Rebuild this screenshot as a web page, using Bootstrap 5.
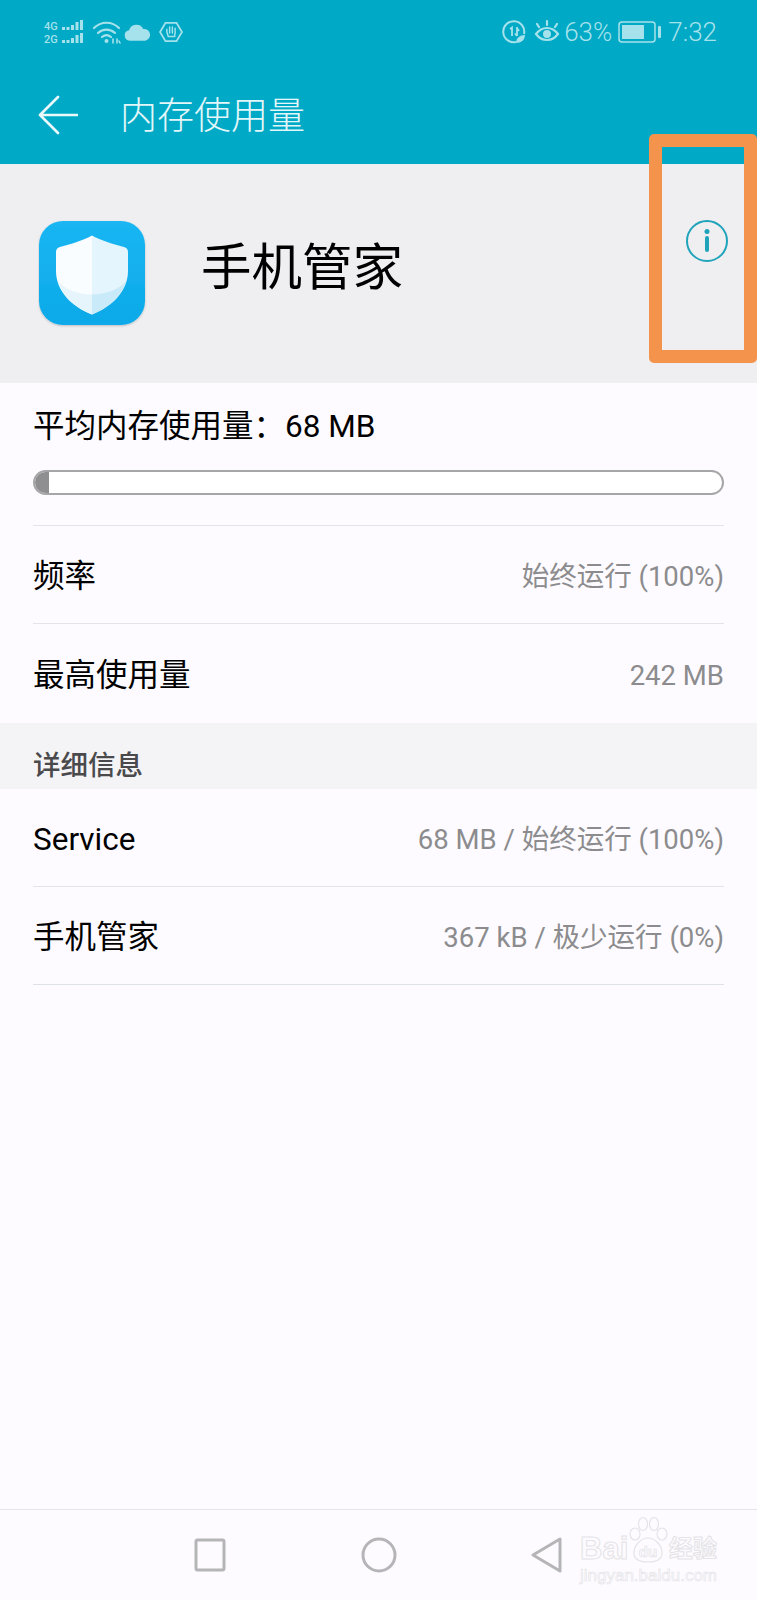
<!DOCTYPE html>
<html lang="zh-CN">
<head>
    <meta charset="UTF-8">
    <meta name="viewport" content="width=device-width, initial-scale=1">
    <title>内存使用量</title>
    <link href="https://cdn.jsdelivr.net/npm/bootstrap@5.3.2/dist/css/bootstrap.min.css" rel="stylesheet">
    <style>
        html, body { height: 100%; }
        body {
            width: 757px;
            height: 1600px;
            overflow: hidden;
            background: #fdfbff;
            color: #000;
            font-family: Roboto, "Noto Sans CJK SC", sans-serif;
        }
        .phone { height: 1600px; position: relative; }
        /* header */
        .top-head { height: 164px; background: #00a9c5; color: #d9f3f7; }
        .status-row { height: 64px; padding: 0 40px 0 44px; color: #a5e2ec; }
        .status-text { font-size: 26px; font-weight: 300; line-height: 1; }
        .batt-ico { margin: 0 6px; }
        .wifi-ico { margin-right: -6px; }
        .title-row { height: 100px; padding: 2px 0 0 38px; }
        .title-text { font-size: 37px; font-weight: 300; margin-left: 42px; padding-top: 2px; line-height: 1; color: #e3f7fa; }
        /* app block */
        .app-block { height: 219px; background: #efeef0; padding: 0 29px 0 38px; }
        .app-name { font-size: 50.500px; font-weight: 400; margin-left: 53px; line-height: 1; padding-bottom: 10px; }
        .info-ico { margin-top: -66px; }
        /* usage */
        .usage-block { padding: 0 33px; }
        .usage-title { height: 87px; font-size: 31.500px; font-weight: 400; }
        .usage-bar { height: 25px; border: 2px solid #a6a6a8; border-radius: 13px; background: #fff; }
        .usage-bar .progress-bar { background: #8f8f92; }
        .usage-gap { height: 31px; border-bottom: 1px solid #e4e3e6; }
        /* rows */
        .info-list { --bs-list-group-bg: transparent; --bs-list-group-border-color: #e4e3e6; margin: 0 33px; }
        .info-list .list-group-item { height: 98px; padding: 4px 0 0; font-size: 31.500px; color: #000; }
        .info-list .list-group-item.no-line { border-bottom: 0; height: 99px; }
        .row-value { font-size: 27.500px; color: #8c8c8e; }
        .section-head { height: 66px; background: #f4f3f6; padding: 19px 33px 0; font-size: 27.500px; font-weight: 500; color: #4a4a4c; }
        /* nav bar */
        .soft-keys { position: absolute; left: 0; right: 0; bottom: 0; height: 91px; border-top: 1px solid #e6e5e8; padding-left: 193px; gap: 133px; }
        /* overlays */
        .mark-box { position: absolute; left: 649px; top: 134px; width: 108px; height: 229px; border: 13px solid #f4934c; border-radius: 5px; }
        .bd-mark { position: absolute; left: 580px; top: 1516px; width: 138px; color: #fdfbff; font-family: "Liberation Sans", "Noto Sans CJK SC", sans-serif; -webkit-text-stroke: 1px #e4e3e6; }
        .bd-top { height: 50px; font-weight: 700; line-height: 1; }
        .bd-lat { font-size: 31px; width: 48px; padding-bottom: 2px; }
        .bd-cn { font-size: 24px; margin-left: 1px; padding-bottom: 5px; white-space: nowrap; }
        .bd-sub { font-size: 17px; line-height: 20px; -webkit-text-stroke: .6px #e4e3e6; white-space: nowrap; }
    </style>
</head>
<body>
<div class="phone">

    <div class="top-head">
        <div class="status-row d-flex align-items-center justify-content-between">
            <div class="d-flex align-items-center gap-2">
                <svg width="40" height="26" viewBox="0 0 40 26" fill="currentColor">
                    <text x="0" y="11" font-size="11" font-weight="500" font-family="Roboto">4G</text>
                    <text x="0" y="24" font-size="11" font-weight="500" font-family="Roboto">2G</text>
                    <rect x="18" y="8" width="3" height="3"/><rect x="22.500" y="8" width="3" height="3"/><rect x="27" y="6" width="3" height="5"/><rect x="31.500" y="3" width="3" height="8"/><rect x="36" y="1" width="3" height="10"/>
                    <rect x="18" y="21" width="3" height="3"/><rect x="22.500" y="21" width="3" height="3"/><rect x="27" y="19" width="3" height="5"/><rect x="31.500" y="16" width="3" height="8"/><rect x="36" y="14" width="3" height="10"/>
                </svg>
                <svg class="wifi-ico" width="30" height="26" viewBox="0 0 30 26" fill="none" stroke="currentColor" stroke-width="2.200" stroke-linecap="round">
                    <path d="M2 9C9 2 20 2 27 9"/><path d="M6 14c5-4.500 12-4.500 17 0"/><path d="M10 18c3-2.500 6-2.500 9 0"/>
                    <circle cx="14.500" cy="22" r="2" fill="currentColor" stroke="none"/>
                    <path d="M21 24v-4M25 24v-4M28 24l-1-2" stroke-width="1.600"/>
                </svg>
                <svg width="27" height="20" viewBox="0 0 28 20" fill="currentColor"><path d="M6 19a5.500 5.500 0 0 1-.8-10.900A8 8 0 0 1 20 7a6 6 0 0 1 2 12z"/></svg>
                <svg width="24" height="22" viewBox="0 0 26 24" fill="none" stroke="currentColor" stroke-width="2"><path d="M7 2h12l6 10-6 10H7L1 12z"/><path d="M8.500 12V9M11.500 13V6.500M14.500 13V6.500M17.500 13V8M8.500 12l1.500 5h7l.5-5" stroke-width="1.600" stroke-linecap="round"/></svg>
            </div>
            <div class="d-flex align-items-center status-text">
                <svg width="24" height="24" viewBox="0 0 24 24" fill="none" stroke="currentColor" stroke-width="2" class="me-2"><path d="M14 22a10.500 10.500 0 1 1 8-8"/><path d="M8 9l2-1.500V16M15 7v9M15 16l-2-2.500M17 11l-2-3" stroke-width="1.800"/><path d="M14 23c0-5 4-8 9-8 0 5-4 8-9 8z" fill="currentColor" stroke="none"/></svg>
                <svg width="26" height="26" viewBox="0 0 26 26" fill="none" stroke="currentColor" stroke-width="2.200" class="me-1"><path d="M2 15c6-8 16-8 22 0-6 8-16 8-22 0z"/><circle cx="13" cy="15" r="4" fill="currentColor" stroke="none"/><path d="M5 8 3 5M13 6V2M21 8l2-3" stroke-linecap="round"/></svg>
                <span>63%</span>
                <svg width="44" height="22" viewBox="0 0 44 22" class="batt-ico"><rect x="1" y="1" width="36" height="20" rx="3" fill="none" stroke="currentColor" stroke-width="1.500"/><rect x="4" y="4" width="22" height="14" fill="currentColor"/><rect x="40" y="5" width="3" height="12" rx="1" fill="currentColor"/></svg>
                <span>7:32</span>
            </div>
        </div>
        <div class="title-row d-flex align-items-center">
            <svg width="40" height="40" viewBox="0 0 40 40" fill="none" stroke="#eafafc" stroke-width="2.600" stroke-linecap="round" stroke-linejoin="round"><path d="M39 20H2M20 2 2 20l18 18"/></svg>
            <span class="title-text">内存使用量</span>
        </div>
    </div>

    <div class="app-block d-flex align-items-center">
        <svg width="110" height="110" viewBox="0 0 110 110">
            <defs><filter id="icoShadow" x="-10%" y="-10%" width="120%" height="120%"><feDropShadow dx="0" dy="1" stdDeviation="1" flood-color="#000" flood-opacity=".2"/></filter>
            <linearGradient id="icoFill" x1="0" y1="0" x2="0" y2="1"><stop offset="0" stop-color="#1ab6f3"/><stop offset="1" stop-color="#0ca9e8"/></linearGradient></defs>
            <rect x="1" y="2" width="106" height="104" rx="24" fill="url(#icoFill)" filter="url(#icoShadow)"/>
            <path d="M54 16.500C46 21 34 25 22 28Q18 29 18 33V52C18 72 34 88 54 95.500Z" fill="#fafdff"/>
            <path d="M54 16.500C62 21 74 25 86 28Q90 29 90 33V52C90 72 74 88 54 95.500Z" fill="#e4f5fd"/>
            <path d="M20 62C26 70 40 75.500 54 75.500V95.500C36 88 24 76 20 62Z" fill="#e6f5fc"/>
            <path d="M88 62C82 70 68 75.500 54 75.500V95.500C72 88 84 76 88 62Z" fill="#c9eaf8"/>
        </svg>
        <span class="app-name">手机管家</span>
        <svg class="ms-auto info-ico" width="42" height="42" viewBox="0 0 42 42" fill="none" stroke="#1fa3bb" stroke-width="2"><circle cx="21" cy="21" r="20"/><circle cx="21" cy="11.500" r="2.500" fill="#1fa3bb" stroke="none"/><path d="M21 18v12" stroke-width="4" stroke-linecap="round"/></svg>
    </div>

    <div class="usage-block">
        <div class="usage-title d-flex align-items-center">平均内存使用量：68 MB</div>
        <div class="progress usage-bar"><div class="progress-bar" style="width: 2%"></div></div>
        <div class="usage-gap"></div>
    </div>
    <div class="list-group list-group-flush info-list">
        <div class="list-group-item d-flex align-items-center justify-content-between"><span>频率</span><span class="row-value">始终运行 (100%)</span></div>
        <div class="list-group-item no-line d-flex align-items-center justify-content-between"><span>最高使用量</span><span class="row-value">242 MB</span></div>
    </div>

    <div class="section-head d-flex align-items-center">详细信息</div>

    <div class="list-group list-group-flush info-list">
        <div class="list-group-item d-flex align-items-center justify-content-between"><span>Service</span><span class="row-value">68 MB / 始终运行 (100%)</span></div>
        <div class="list-group-item d-flex align-items-center justify-content-between border-bottom"><span>手机管家</span><span class="row-value">367 kB / 极少运行 (0%)</span></div>
    </div>

    <div class="soft-keys d-flex align-items-center">
        <svg width="34" height="36" viewBox="0 0 34 36" fill="none" stroke="#b5b5b7" stroke-width="3" stroke-linejoin="round"><rect x="3" y="3" width="28" height="30" rx="1.500"/></svg>
        <svg width="38" height="38" viewBox="0 0 38 38" fill="none" stroke="#b5b5b7" stroke-width="3"><circle cx="19" cy="19" r="16"/></svg>
        <svg width="32" height="38" viewBox="0 0 32 38" fill="none" stroke="#b5b5b7" stroke-width="3" stroke-linejoin="round"><path d="M29 3V35L2 19Z"/></svg>
    </div>

    <div class="mark-box"></div>

    <div class="bd-mark">
        <div class="bd-top d-flex align-items-end">
            <span class="bd-lat">Bai</span>
            <svg width="40" height="50" viewBox="0 0 40 50" fill="#fdfbff" stroke="#e4e3e6" stroke-width="1.200">
                <ellipse cx="7" cy="18" rx="5" ry="6"/><ellipse cx="15" cy="8" rx="4.500" ry="6.500"/><ellipse cx="26" cy="8" rx="4.500" ry="6.500"/><ellipse cx="34" cy="18" rx="5" ry="6"/>
                <path d="M20 22c7 0 14 7 14 15 0 7-6 9-14 9S6 44 6 37c0-8 7-15 14-15z"/>
                <text x="20" y="41" text-anchor="middle" font-size="15" font-family="Liberation Sans" stroke-width=".7">du</text>
            </svg>
            <span class="bd-cn">经验</span>
        </div>
        <div class="bd-sub">jingyan.baidu.com</div>
    </div>
</div>
</body>
</html>
